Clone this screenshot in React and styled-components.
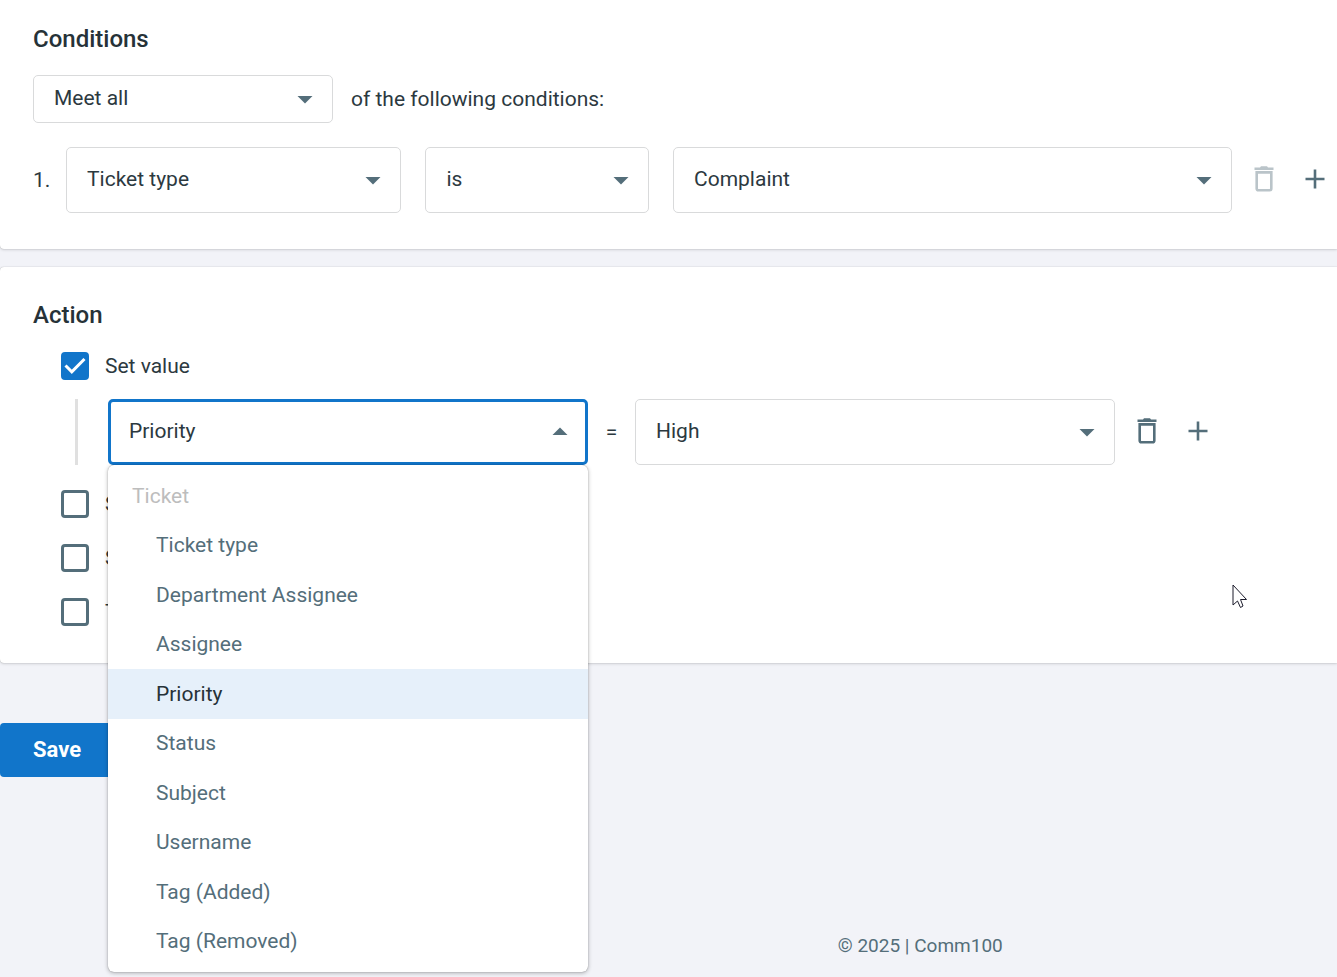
import { useState } from 'react'
import styled, { createGlobalStyle, css } from 'styled-components'

const GlobalStyle = createGlobalStyle`
  * {
    box-sizing: border-box;
  }
  body {
    margin: 0;
    background: #f2f3f8;
    color: #2c393f;
    font-family: Roboto, "Liberation Sans", sans-serif;
    font-size: 21px;
    line-height: 28px;
  }
`

const Page = styled.main`
  display: flex;
  flex-direction: column;
  overflow: hidden;
`

const Card = styled.section`
  padding: 24px 0 36px 33px;
  background: #fff;
  border-radius: 0 0 0 4px;
  box-shadow: 0 1px 3px rgba(0, 0, 0, 0.14), 0 0 1px rgba(0, 0, 0, 0.3);
  & + & {
    margin-top: 18px;
    padding: 33px 0 37px 33px;
    border-radius: 4px 0 0 4px;
  }
`

const Title = styled.h2`
  margin: 0;
  color: #263238;
  font-size: 24px;
  font-weight: 500;
  line-height: 30px;
`

const MatchRow = styled.div`
  display: flex;
  align-items: center;
  gap: 18px;
  margin-top: 21px;
`

const ConditionRow = styled.div`
  display: flex;
  align-items: center;
  gap: 24px;
  margin-top: 24px;
  padding-right: 4px;
`

const Fields = styled.div`
  display: flex;
  flex: 1;
  gap: 24px;
`

const RowNumber = styled.span`
  width: 33px;
  margin-right: -24px;
`

const SelectBox = styled.div`
  display: grid;
  align-items: center;
  min-width: 0;
  flex: ${props => props.$grow || 1} 1 0;
  max-width: ${props => props.$max || 'none'};
  & > * {
    grid-area: 1 / 1;
  }
`

const Select = styled.select`
  appearance: none;
  width: 100%;
  height: ${props => (props.$small ? '48px' : '66px')};
  padding: 0 60px 2px 20px;
  border: 1px solid #d9dadb;
  border-radius: 5px;
  outline: none;
  background: #fff;
  color: inherit;
  font: inherit;
  ${props => props.$open && css`
    padding: 0 58px 2px 18px;
    border: 3px solid #1175ca;
  `}
`

const Arrow = styled.svg`
  width: 36px;
  height: 36px;
  margin-right: 10px;
  justify-self: end;
  fill: #546e7a;
  pointer-events: none;
  transform: ${props => (props.$up ? 'rotate(180deg)' : 'none')};
`

const Buttons = styled.div`
  display: flex;
  gap: 15px;
  margin-left: -10px;
  padding-bottom: 2px;
`

const IconButton = styled.button`
  display: flex;
  align-items: center;
  justify-content: center;
  width: 36px;
  height: 36px;
  padding: 0;
  border: 0;
  background: none;
  color: #546e7a;
  cursor: pointer;
  &:disabled {
    opacity: 0.4;
    cursor: default;
  }
`

const ActionList = styled.div`
  display: flex;
  flex-direction: column;
  gap: 26px;
  margin: 22px 0 0 28px;
`

const CheckLabel = styled.label`
  display: flex;
  align-items: center;
  gap: 16px;
  align-self: flex-start;
`

const CheckMark = styled.span`
  display: grid;
  & > * {
    grid-area: 1 / 1;
  }
  & svg {
    fill: none;
    stroke: #fff;
    stroke-width: 3;
    pointer-events: none;
  }
`

const CheckInput = styled.input`
  appearance: none;
  width: 28px;
  height: 28px;
  margin: 0;
  border: 3px solid #546e7a;
  border-radius: 4px;
  &:checked {
    border-color: #1175ca;
    background: #1175ca;
  }
`

const ValueRow = styled.div`
  display: flex;
  align-items: center;
  margin: -7px 0 -1px 14px;
  padding-left: 30px;
  border-left: 3px solid #e0e0e0;
`

const Equals = styled.span`
  width: 47px;
  text-align: center;
`

const RowButtons = styled(Buttons)`
  margin-left: 14px;
`

const Dropdown = styled.div`
  position: relative;
  flex: 1 1 0;
  max-width: 480px;
`

const Menu = styled.ul`
  position: absolute;
  top: 100%;
  left: 0;
  right: 0;
  z-index: 1;
  display: grid;
  grid-auto-rows: 1fr;
  height: 507px;
  margin: 0;
  padding: 6px 0;
  border-radius: 6px;
  background: #fff;
  box-shadow: 0 1px 4px rgba(0, 0, 0, 0.3), 0 0 1px rgba(0, 0, 0, 0.4);
  list-style: none;
`

const MenuItem = styled.li`
  display: flex;
  align-items: center;
  padding-left: 48px;
  color: ${props => (props.$selected ? '#263238' : '#546e7a')};
  background: ${props => (props.$selected ? '#e6f0fa' : 'none')};
`

const MenuGroup = styled(MenuItem)`
  padding-left: 24px;
  color: #bdbdbd;
`

const SaveButton = styled.button`
  align-self: flex-start;
  height: 54px;
  margin-top: 60px;
  padding: 0 33px;
  border: 0;
  border-radius: 4px;
  background: #1175ca;
  color: #fff;
  font: inherit;
  font-size: 22px;
  font-weight: 700;
`

const Footer = styled.footer`
  margin-top: 155px;
  padding: 0 25% 17px 0;
  color: #546e7a;
  font-size: 19px;
  text-align: right;
`

const Cursor = styled.svg`
  position: absolute;
  top: 584px;
  left: 1232px;
  z-index: 2;
`

const TrashIcon = () => (
  <svg width="20" height="26" viewBox="0 0 20 26" fill="none">
    <path d="M0.5 1.4H6L7 0.3H13L14 1.4H19.5V4H0.5Z" fill="currentColor" />
    <path d="M2.7 6.4H17.3V22.4Q17.3 24.2 15.5 24.2H4.5Q2.7 24.2 2.7 22.4Z" stroke="currentColor" strokeWidth="2.6" />
  </svg>
)

const PlusIcon = () => (
  <svg width="20" height="20" viewBox="0 0 20 20" fill="none">
    <path d="M10 0.5V19.5M0.5 10H19.5" stroke="currentColor" strokeWidth="2.6" />
  </svg>
)

const Picker = ({ label, options, small, open, grow, max }) => (
  <SelectBox $grow={grow} $max={max}>
    <Select aria-label={label} $small={small} $open={open}>
      {options.map(option => <option key={option}>{option}</option>)}
    </Select>
    <Arrow viewBox="0 0 24 24" $up={open}>
      <path d="M7 10l5 5 5-5z" />
    </Arrow>
  </SelectBox>
)

const Check = ({ label, defaultChecked = false }) => {
  const [checked, setChecked] = useState(defaultChecked)
  return (
    <CheckLabel>
      <CheckMark>
        <CheckInput type="checkbox" checked={checked} onChange={e => setChecked(e.target.checked)} />
        {checked && (
          <svg width="28" height="28" viewBox="0 0 28 28">
            <path d="M4.5 13.5L10.8 19.8L23.5 7" />
          </svg>
        )}
      </CheckMark>
      {label}
    </CheckLabel>
  )
}

const fields = [
  'Ticket type',
  'Department Assignee',
  'Assignee',
  'Priority',
  'Status',
  'Subject',
  'Username',
  'Tag (Added)',
  'Tag (Removed)',
]

const App = () => (
  <Page>
    <GlobalStyle />
    <Card>
      <Title>Conditions</Title>
      <MatchRow>
        <Picker label="Match" options={['Meet all', 'Meet any']} small max="300px" />
        <span>of the following conditions:</span>
      </MatchRow>
      <ConditionRow>
        <RowNumber>1.</RowNumber>
        <Fields>
          <Picker label="Field" options={['Ticket type', 'Status']} grow={3} />
          <Picker label="Operator" options={['is', 'is not']} grow={2} />
          <Picker label="Value" options={['Complaint', 'Question']} grow={5} />
        </Fields>
        <Buttons>
          <IconButton aria-label="Delete condition" disabled><TrashIcon /></IconButton>
          <IconButton aria-label="Add condition"><PlusIcon /></IconButton>
        </Buttons>
      </ConditionRow>
    </Card>
    <Card>
      <Title>Action</Title>
      <ActionList>
        <Check label="Set value" defaultChecked />
        <ValueRow>
          <Dropdown>
            <Picker label="Action field" options={['Priority']} open />
            <Menu role="listbox" aria-label="Action field options">
              <MenuGroup role="presentation">Ticket</MenuGroup>
              {fields.map(field => (
                <MenuItem
                  key={field}
                  role="option"
                  aria-selected={field === 'Priority'}
                  $selected={field === 'Priority'}
                >
                  {field}
                </MenuItem>
              ))}
            </Menu>
          </Dropdown>
          <Equals>=</Equals>
          <Picker label="Action value" options={['High', 'Normal', 'Low']} max="480px" />
          <RowButtons>
            <IconButton aria-label="Delete action"><TrashIcon /></IconButton>
            <IconButton aria-label="Add action"><PlusIcon /></IconButton>
          </RowButtons>
        </ValueRow>
        <Check label="Send email" />
        <Check label="Show alert" />
        <Check label="Trigger" />
      </ActionList>
    </Card>
    <SaveButton>Save</SaveButton>
    <Footer>© 2025 | Comm100</Footer>
    <Cursor width="16" height="25" viewBox="0 0 16 25">
      <path d="M1 1V21L5.5 17L8.5 23.5L11 22L8.5 15.5H14.5Z" fill="#fff" stroke="#1b1b2b" strokeWidth="1" />
    </Cursor>
  </Page>
)

export default App
